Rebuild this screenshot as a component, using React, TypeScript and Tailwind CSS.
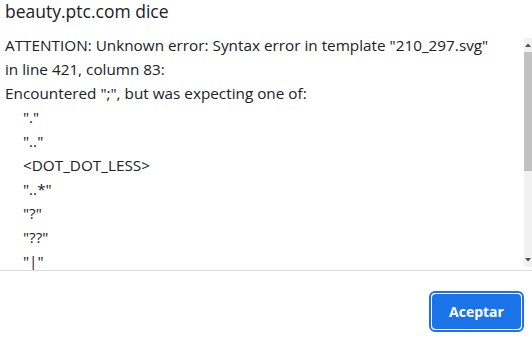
const lines: { text: string; indent?: boolean }[] = [
  { text: 'ATTENTION: Unknown error: Syntax error in template "210_297.svg"' },
  { text: "in line 421, column 83:" },
  { text: 'Encountered ";", but was expecting one of:' },
  { text: '"."', indent: true },
  { text: '".."', indent: true },
  { text: "<DOT_DOT_LESS>", indent: true },
  { text: '"..*"', indent: true },
  { text: '"?"', indent: true },
  { text: '"??"', indent: true },
  { text: '"|"', indent: true },
];

export default function App() {
  return (
    <div
      className="w-[532px] h-[339px] bg-white text-[#202124] overflow-hidden"
      style={{ fontFamily: '"Open Sans", "Noto Sans", sans-serif' }}
    >
      {/* title */}
      <div className="pl-[5px] h-[33px] text-[17.5px] leading-[22px] text-[#202124] whitespace-nowrap">
        beauty.ptc.com dice
      </div>

      {/* message body */}
      <div className="flex h-[238px] border-b border-[#dadce0]">
        <div className="flex-1 overflow-hidden pl-[5px] text-[15.3px] leading-[24px] whitespace-pre">
          {lines.map((l, i) => (
            <div key={i} className={l.indent ? "pl-[18px]" : ""}>
              {l.text}
            </div>
          ))}
        </div>
        {/* scrollbar */}
        <div className="w-[8px] mt-[5px] mb-[3px] bg-[#f1f1f1] flex flex-col">
          <div className="h-[14px] flex items-center justify-center">
            <svg width="8" height="6" viewBox="0 0 8 6">
              <path d="M1 5 L4 1.5 L7 5 Z" fill="#505050" />
            </svg>
          </div>
          <div className="h-[119px] bg-[#c1c1c1]" />
          <div className="flex-1" />
          <div className="h-[14px] flex items-center justify-center">
            <svg width="8" height="6" viewBox="0 0 8 6">
              <path d="M1 1 L4 4.5 L7 1 Z" fill="#505050" />
            </svg>
          </div>
        </div>
      </div>

      {/* footer */}
      <div className="flex justify-end pr-[8px] pt-[20px]">
        <button className="w-[95px] h-[41px] rounded-[6px] border-2 border-[#1a73e8] bg-white p-px">
          <div className="h-full w-full rounded-[4px] bg-[#1a73e8] flex items-center justify-center text-white font-bold text-[14px]">
            Aceptar
          </div>
        </button>
      </div>
    </div>
  );
}
